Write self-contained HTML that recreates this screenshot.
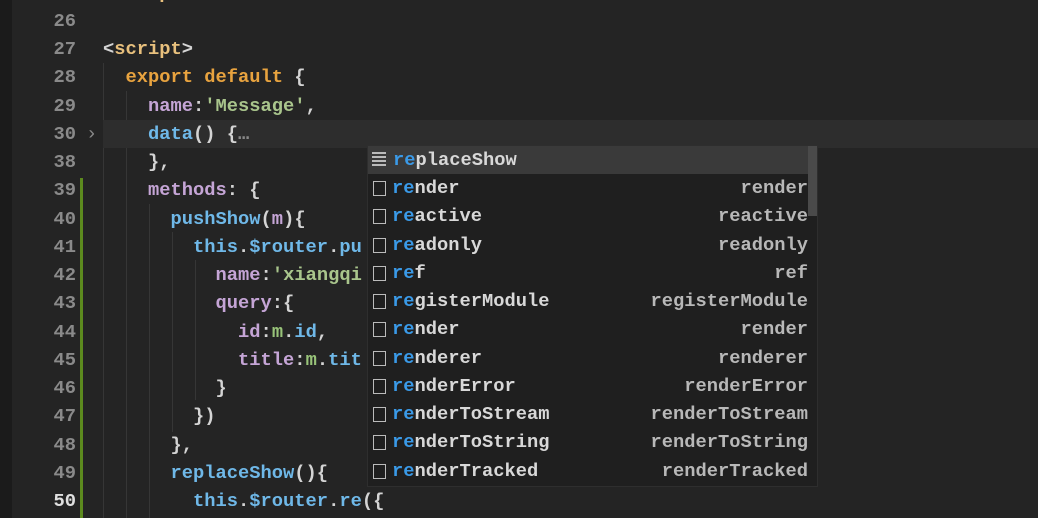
<!DOCTYPE html>
<html><head><meta charset="utf-8"><style>
html,body{margin:0;padding:0;width:1038px;height:518px;overflow:hidden;background:#242424}
body{position:relative;font-family:"Liberation Mono","DejaVu Sans Mono",monospace;font-size:18.75px;}
.strip{position:absolute;left:0;top:0;width:12px;height:518px;background:#1b1b1b}
.row{position:absolute;left:0;height:28px;line-height:28px;width:1038px;white-space:pre}
.ln{position:absolute;left:20px;width:56px;text-align:right;color:#8a8a8a;font-weight:bold}
.code{position:absolute;left:103px;color:#d4d4d4;font-weight:bold}
.k{color:#e8a33f}.t{color:#e8c07d}.p{color:#c5a5d6}.f{color:#6fb8e8}.s{color:#a9c58c}.g{color:#98c379}.d{color:#d4d4d4}
.hl{background:#2d2d2d}
.bar{position:absolute;left:80px;top:178px;width:3px;height:340px;background:#5c8a1e}
.guide{position:absolute;width:1px;background:#363636}
.pop{position:absolute;left:367px;top:145px;width:451px;height:342px;background:#1f1f1f;border:1px solid #2e2e2e;box-sizing:border-box}
.pr{position:absolute;left:0;width:441px;height:28px;line-height:28px;font-weight:bold;color:#d8d8d8}
.pr .i{position:absolute;left:5px;top:7px;width:13px;height:15px;border:1.5px solid #bbb;box-sizing:border-box}
.pr .n{position:absolute;left:24px}
.pr .r{position:absolute;right:1px;color:#b8b8b8}
.m{color:#3a9ae8}
.sel{background:#3a3a3a}
.sb{position:absolute;right:0;top:0;width:9px;height:70px;background:#4a4a4a}
</style></head><body>
<div class="strip"></div>
<div class="guide" style="left:103px;top:63px;height:455px"></div>
<div class="guide" style="left:126px;top:91px;height:427px"></div>
<div class="guide" style="left:149px;top:204px;height:314px"></div>
<div class="guide" style="left:172px;top:232px;height:200px"></div>
<div class="guide" style="left:195px;top:260px;height:140px"></div>
<div class="bar"></div>

<div class="row" style="top:-21px"><span class="ln">25</span><span class="code"><span class="d">&lt;/</span><span class="t">template</span><span class="d">&gt;</span></span></div>
<div class="row" style="top:7px"><span class="ln">26</span></div>
<div class="row" style="top:35px"><span class="ln">27</span><span class="code"><span class="d">&lt;</span><span class="t">script</span><span class="d">&gt;</span></span></div>
<div class="row" style="top:63px"><span class="ln">28</span><span class="code">  <span class="k">export default</span> {</span></div>
<div class="row" style="top:92px"><span class="ln">29</span><span class="code">    <span class="p">name</span>:<span class="s">'Message'</span>,</span></div>
<div class="row hl" style="top:120px;left:103px;width:935px"></div>
<div class="row" style="top:120px"><span class="ln">30</span><span style="position:absolute;left:86px;color:#888">›</span><span class="code">    <span class="f">data</span>() {<span style="color:#888">…</span></span></div>
<div class="row" style="top:148px"><span class="ln">38</span><span class="code">    },</span></div>
<div class="row" style="top:176px"><span class="ln">39</span><span class="code">    <span class="p">methods</span>: {</span></div>
<div class="row" style="top:205px"><span class="ln">40</span><span class="code">      <span class="f">pushShow</span>(<span class="p">m</span>){</span></div>
<div class="row" style="top:233px"><span class="ln">41</span><span class="code">        <span class="f">this</span>.<span class="f">$router</span>.<span class="f">pu</span></span></div>
<div class="row" style="top:261px"><span class="ln">42</span><span class="code">          <span class="p">name</span>:<span class="s">'xiangqi</span></span></div>
<div class="row" style="top:289px"><span class="ln">43</span><span class="code">          <span class="p">query</span>:{</span></div>
<div class="row" style="top:318px"><span class="ln">44</span><span class="code">            <span class="p">id</span>:<span class="g">m</span>.<span class="f">id</span>,</span></div>
<div class="row" style="top:346px"><span class="ln">45</span><span class="code">            <span class="p">title</span>:<span class="g">m</span>.<span class="f">tit</span></span></div>
<div class="row" style="top:374px"><span class="ln">46</span><span class="code">          }</span></div>
<div class="row" style="top:402px"><span class="ln">47</span><span class="code">        })</span></div>
<div class="row" style="top:431px"><span class="ln">48</span><span class="code">      },</span></div>
<div class="row" style="top:459px"><span class="ln">49</span><span class="code">      <span class="f">replaceShow</span>(){</span></div>
<div class="row" style="top:487px"><span class="ln" style="color:#e0e0e0">50</span><span class="code">        <span class="f">this</span>.<span class="f">$router</span>.<span class="f">re</span>({</span></div>

<div class="pop">
<div class="pr sel" style="top:0;width:449px"><span class="i" style="border:none;top:6px;left:4px;width:14px;height:16px;background:repeating-linear-gradient(#bbb 0 2px,transparent 2px 4px)"></span><span class="n" style="left:25px"><span class="m">re</span>placeShow</span></div>
<div class="pr" style="top:28px"><span class="i"></span><span class="n"><span class="m">re</span>nder</span><span class="r">render</span></div>
<div class="pr" style="top:56px"><span class="i"></span><span class="n"><span class="m">re</span>active</span><span class="r">reactive</span></div>
<div class="pr" style="top:85px"><span class="i"></span><span class="n"><span class="m">re</span>adonly</span><span class="r">readonly</span></div>
<div class="pr" style="top:113px"><span class="i"></span><span class="n"><span class="m">re</span>f</span><span class="r">ref</span></div>
<div class="pr" style="top:141px"><span class="i"></span><span class="n"><span class="m">re</span>gisterModule</span><span class="r">registerModule</span></div>
<div class="pr" style="top:169px"><span class="i"></span><span class="n"><span class="m">re</span>nder</span><span class="r">render</span></div>
<div class="pr" style="top:198px"><span class="i"></span><span class="n"><span class="m">re</span>nderer</span><span class="r">renderer</span></div>
<div class="pr" style="top:226px"><span class="i"></span><span class="n"><span class="m">re</span>nderError</span><span class="r">renderError</span></div>
<div class="pr" style="top:254px"><span class="i"></span><span class="n"><span class="m">re</span>nderToStream</span><span class="r">renderToStream</span></div>
<div class="pr" style="top:282px"><span class="i"></span><span class="n"><span class="m">re</span>nderToString</span><span class="r">renderToString</span></div>
<div class="pr" style="top:311px"><span class="i"></span><span class="n"><span class="m">re</span>nderTracked</span><span class="r">renderTracked</span></div>
<div class="sb"></div>
</div>
</body></html>
